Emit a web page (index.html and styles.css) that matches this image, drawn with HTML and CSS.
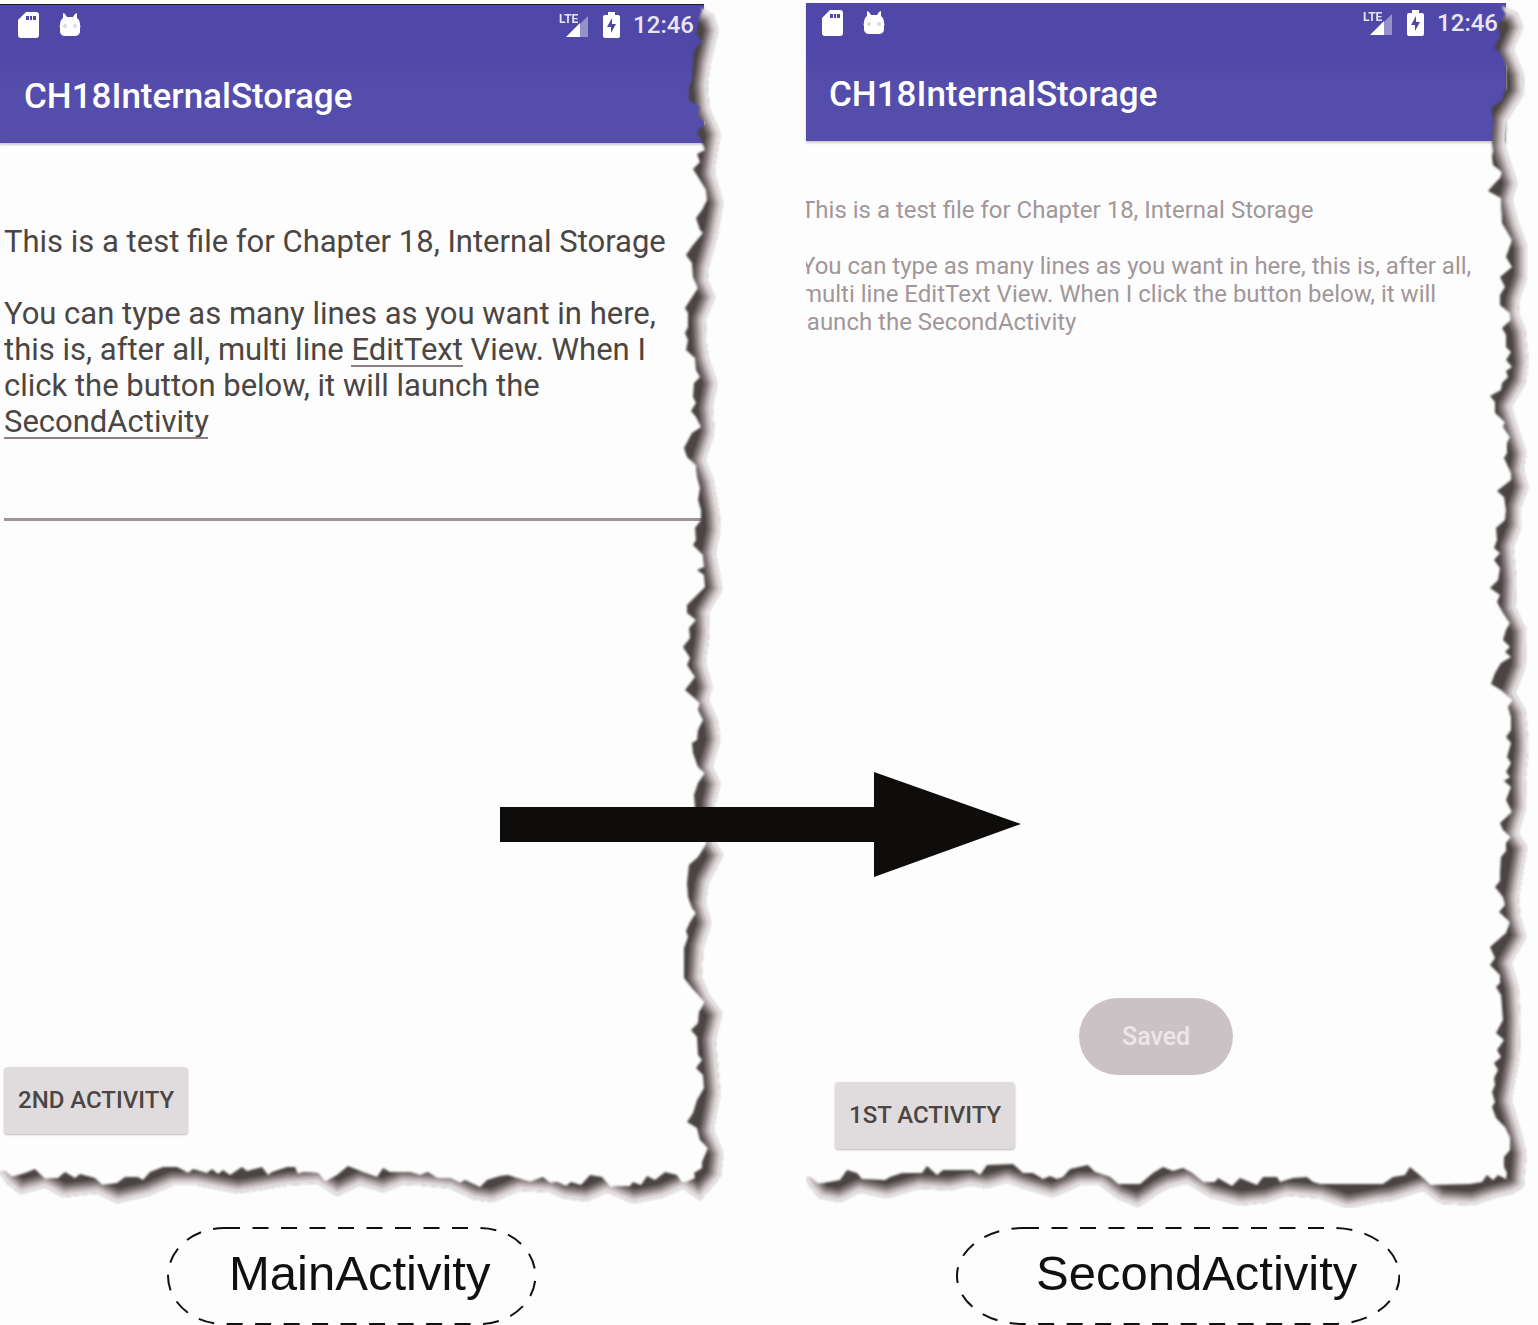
FILE: index.html
```html
<!DOCTYPE html>
<html lang="en">
<head>
<meta charset="utf-8">
<meta name="viewport" content="width=device-width, initial-scale=1">
<title>CH18InternalStorage</title>
<link rel="stylesheet" href="styles.css">
</head>
<body>
<svg class="defs" aria-hidden="true">
  <defs>
    <symbol id="sd" viewBox="0 0 21 26"><path fill-rule="evenodd" d="M8 0H18Q21 0 21 3V23Q21 26 18 26H3Q0 26 0 23V8ZM8 4V8H11V4ZM12 4V8H14V4ZM15 4V8H18V4Z"/></symbol>
    <symbol id="droid" viewBox="0 0 22 24"><path d="M4 0 6 1 8 4H14L16 1 18 0V5Q21 7 21 12 22 13 21 15V19Q20 23 16 23H6Q2 23 1 19V15Q0 13 1 12 1 7 4 5Z"/><circle cx="6" cy="13" r="2" fill="#dcd8e4"/><circle cx="16" cy="13" r="2" fill="#dcd8e4"/></symbol>
    <symbol id="signal" viewBox="0 0 30 26"><path d="M29 4V25H8Z" opacity=".4"/><path d="M21 11V25H7Z"/><text x="0" y="11" font-size="12" font-weight="700" opacity=".85">LTE</text></symbol>
    <symbol id="battery" viewBox="0 0 17 26"><path fill-rule="evenodd" d="M5 0H12V3H15Q17 3 17 5V24Q17 26 15 26H2Q0 26 0 24V5Q0 3 2 3H5ZM9 6 4 15H8V21L13 12H9Z"/></symbol>
  </defs>
</svg>
<main class="board">
  <figure class="figure">
    <section class="screen screen-main">
      <header class="top">
        <div class="status">
          <svg class="sd"><use href="#sd"/></svg>
          <svg class="droid"><use href="#droid"/></svg>
          <svg class="signal"><use href="#signal"/></svg>
          <svg class="battery"><use href="#battery"/></svg>
          <time>12:46</time>
        </div>
        <h1 class="title">CH18InternalStorage</h1>
      </header>
      <div class="editor">
        <textarea class="edit" aria-label="File contents" spellcheck="false">This is a test file for Chapter 18, Internal Storage

You can type as many lines as you want in here, this is, after all, multi line EditText View. When I click the button below, it will launch the SecondActivity</textarea>
        <span class="typo typo-edittext"></span>
        <span class="typo typo-second"></span>
      </div>
      <button class="btn" type="button">2ND ACTIVITY</button>
      <svg class="torn" viewBox="0 0 728 1208" preserveAspectRatio="none" aria-hidden="true">
        <defs>
          <path id="outerA" d="M702 8 713 15 718 30 710 63 707 85 709 108 720 133 715 165 714 173 723 203 716 240 708 268 707 280 715 297 705 320 706 343 708 357 717 383 712 407 714 433 705 460 713 480 719 513 720 530 715 553 722 590 708 613 709 633 705 663 712 687 708 700 717 720 720 740 712 767 720 783 715 803 715 842 723 855 708 883 705 903 711 923 703 947 701 977 710 997 722 1013 715 1040 720 1093 713 1130 723 1153 720 1177 700 1200 683 1188 663 1197 633 1203 607 1192 587 1201 563 1198 550 1192 520 1190 493 1202 473 1199 450 1188 420 1185 403 1184 383 1192 360 1185 337 1196 317 1183 287 1185 238 1193 197 1185 173 1185 150 1195 117 1203 97 1193 63 1197 45 1187 20 1194 7 1183 0 1173"/>
          <clipPath id="bandA"><path clip-rule="evenodd" d="M0 0 702 8 713 15 718 30 710 63 707 85 709 108 720 133 715 165 714 173 723 203 716 240 708 268 707 280 715 297 705 320 706 343 708 357 717 383 712 407 714 433 705 460 713 480 719 513 720 530 715 553 722 590 708 613 709 633 705 663 712 687 708 700 717 720 720 740 712 767 720 783 715 803 715 842 723 855 708 883 705 903 711 923 703 947 701 977 710 997 722 1013 715 1040 720 1093 713 1130 723 1153 720 1177 700 1200 683 1188 663 1197 633 1203 607 1192 587 1201 563 1198 550 1192 520 1190 493 1202 473 1199 450 1188 420 1185 403 1184 383 1192 360 1185 337 1196 317 1183 287 1185 238 1193 197 1185 173 1185 150 1195 117 1203 97 1193 63 1197 45 1187 20 1194 7 1183 0 1173Z
          M0 0 702 8 702 11 699 19 696 33 702 42 695 48 693 60 692 80 689 87 689 100 700 107 698 115 705 123 697 132 702 142 705 150 697 154 700 162 693 169 700 180 706 190 707 200 702 210 696 218 700 230 703 233 693 245 686 255 692 263 693 277 698 288 685 308 688 313 688 327 685 333 688 340 686 350 695 358 696 370 700 377 694 383 693 397 696 403 691 411 696 417 701 427 692 433 684 448 687 457 696 465 697 477 700 488 698 500 701 510 701 520 695 528 696 540 693 545 703 555 704 567 697 570 704 575 705 587 687 605 687 613 696 620 689 628 690 638 683 647 690 658 687 665 695 677 685 690 700 703 698 710 703 720 698 730 697 740 692 743 693 753 698 767 705 773 698 783 694 795 695 807 707 843 698 857 689 865 687 883 688 897 692 908 696 913 690 922 686 931 688 937 684 948 684 978 692 988 705 1002 699 1012 698 1023 691 1030 697 1037 698 1055 702 1060 696 1068 703 1075 704 1088 697 1100 693 1113 687 1122 697 1128 700 1140 708 1148 702 1162 702 1168 694 1173 695 1178 685 1183 681 1182 677 1175 665 1172 655 1180 647 1176 641 1185 633 1182 630 1186 610 1187 602 1177 590 1175 581 1185 571 1182 566 1186 557 1182 550 1183 543 1177 530 1182 517 1178 508 1175 500 1176 487 1180 480 1187 465 1180 460 1183 450 1178 437 1178 428 1172 420 1175 410 1172 390 1172 383 1168 377 1177 363 1172 348 1166 337 1175 325 1182 318 1173 303 1172 298 1174 295 1167 287 1167 272 1172 268 1175 262 1167 247 1171 242 1167 230 1175 223 1170 218 1174 212 1169 207 1173 193 1169 188 1173 183 1170 177 1167 163 1167 150 1172 143 1180 138 1177 125 1177 117 1183 102 1185 95 1178 80 1174 75 1178 65 1172 58 1178 45 1179 35 1169 25 1173 12 1177 5 1171 0 1172Z"/></clipPath>
        </defs>
        <g class="soft"><g clip-path="url(#bandA)"><rect class="dark" width="728" height="1208"/><use href="#outerA" class="s1"/><use href="#outerA" class="s2"/><use href="#outerA" class="s3"/><use href="#outerA" class="s4"/></g></g>
      </svg>
    </section>
    <figcaption class="label label-main">
      <svg aria-hidden="true"><rect x="1" y="1" rx="56" ry="48" stroke-dasharray="16 12.5"/></svg>
      <span>MainActivity</span>
    </figcaption>
  </figure>

  <figure class="figure">
    <section class="screen screen-second">
      <header class="top">
        <div class="status">
          <svg class="sd"><use href="#sd"/></svg>
          <svg class="droid"><use href="#droid"/></svg>
          <svg class="signal"><use href="#signal"/></svg>
          <svg class="battery"><use href="#battery"/></svg>
          <time>12:46</time>
        </div>
        <h1 class="title">CH18InternalStorage</h1>
      </header>
      <div class="reader">
        <p>This is a test file for Chapter 18, Internal Storage</p>
        <p>You can type as many lines as you want in here, this is, after all, multi line EditText View. When I click the button below, it will launch the SecondActivity</p>
      </div>
      <div class="toast" role="status">Saved</div>
      <button class="btn" type="button">1ST ACTIVITY</button>
      <svg class="torn" viewBox="806 0 732 1208" preserveAspectRatio="none" aria-hidden="true">
        <defs>
          <path id="outerB" d="M1502 6 1517 13 1523 27 1513 50 1523 73 1524 93 1507 120 1505 147 1517 183 1512 200 1518 223 1527 247 1527 277 1519 300 1518 313 1525 330 1528 363 1525 383 1511 407 1516 423 1526 453 1523 470 1528 487 1521 507 1521 527 1513 547 1516 580 1515 607 1526 630 1525 667 1515 693 1525 710 1528 740 1528 750 1525 777 1526 807 1518 833 1527 847 1518 897 1520 917 1526 937 1511 963 1518 987 1520 1017 1519 1057 1511 1100 1520 1130 1526 1153 1523 1187 1513 1193 1493 1198 1473 1205 1440 1203 1423 1190 1393 1200 1377 1202 1347 1208 1320 1198 1287 1195 1267 1202 1240 1205 1210 1197 1187 1183 1170 1187 1160 1192 1138 1207 1117 1198 1100 1185 1080 1185 1053 1197 1023 1188 1007 1182 987 1188 970 1185 950 1190 920 1188 887 1198 860 1192 840 1202 820 1198 810 1187 806 1178"/>
          <clipPath id="bandB"><path clip-rule="evenodd" d="M806 0 1502 6 1517 13 1523 27 1513 50 1523 73 1524 93 1507 120 1505 147 1517 183 1512 200 1518 223 1527 247 1527 277 1519 300 1518 313 1525 330 1528 363 1525 383 1511 407 1516 423 1526 453 1523 470 1528 487 1521 507 1521 527 1513 547 1516 580 1515 607 1526 630 1525 667 1515 693 1525 710 1528 740 1528 750 1525 777 1526 807 1518 833 1527 847 1518 897 1520 917 1526 937 1511 963 1518 987 1520 1017 1519 1057 1511 1100 1520 1130 1526 1153 1523 1187 1513 1193 1493 1198 1473 1205 1440 1203 1423 1190 1393 1200 1377 1202 1347 1208 1320 1198 1287 1195 1267 1202 1240 1205 1210 1197 1187 1183 1170 1187 1160 1192 1138 1207 1117 1198 1100 1185 1080 1185 1053 1197 1023 1188 1007 1182 987 1188 970 1185 950 1190 920 1188 887 1198 860 1192 840 1202 820 1198 810 1187 806 1178Z
          M806 0 1502 6 1506 15 1498 25 1500 37 1494 47 1502 55 1506 67 1506 88 1502 100 1491 108 1493 117 1493 130 1492 142 1493 150 1492 157 1493 165 1502 172 1500 178 1495 183 1488 191 1501 198 1502 223 1512 240 1506 257 1512 267 1500 277 1505 287 1500 295 1500 305 1510 313 1511 320 1502 328 1506 335 1506 347 1511 352 1506 360 1512 367 1506 371 1508 377 1502 383 1501 390 1490 396 1495 402 1495 413 1505 422 1503 427 1510 437 1507 443 1507 453 1504 458 1511 473 1511 480 1497 491 1504 497 1506 510 1505 520 1496 528 1497 540 1494 548 1500 553 1494 560 1500 568 1498 580 1490 588 1500 595 1497 602 1503 613 1510 623 1506 630 1503 640 1510 647 1505 652 1511 657 1501 663 1495 673 1491 684 1501 690 1513 700 1508 707 1511 717 1511 730 1506 737 1511 743 1507 757 1511 763 1506 772 1510 777 1504 781 1511 787 1506 800 1512 812 1500 823 1503 830 1511 837 1506 843 1506 851 1501 857 1500 873 1500 881 1495 887 1503 897 1505 905 1499 912 1510 922 1506 933 1490 947 1495 958 1490 965 1500 975 1500 983 1496 987 1501 995 1503 1020 1496 1033 1504 1040 1497 1050 1501 1057 1494 1063 1498 1070 1494 1078 1495 1085 1492 1092 1495 1102 1492 1107 1496 1118 1505 1127 1510 1137 1510 1150 1504 1157 1504 1167 1507 1173 1506 1178 1508 1180 1498 1175 1493 1180 1487 1175 1482 1182 1470 1184 1430 1185 1423 1178 1410 1167 1405 1175 1393 1177 1383 1184 1320 1184 1313 1182 1307 1177 1293 1178 1280 1182 1277 1177 1263 1177 1257 1185 1240 1178 1232 1186 1218 1178 1215 1182 1203 1182 1192 1173 1183 1168 1173 1171 1163 1167 1153 1173 1140 1184 1118 1184 1110 1177 1095 1172 1088 1165 1070 1169 1063 1177 1057 1179 1050 1176 1043 1179 1033 1173 1023 1173 1013 1164 987 1165 980 1175 973 1170 943 1170 937 1175 927 1166 922 1173 902 1173 890 1177 885 1180 862 1179 857 1173 847 1170 840 1180 818 1184 810 1177 806 1178Z"/></clipPath>
        </defs>
        <g class="soft"><g clip-path="url(#bandB)"><rect class="dark" x="806" width="732" height="1208"/><use href="#outerB" class="s1"/><use href="#outerB" class="s2"/><use href="#outerB" class="s3"/><use href="#outerB" class="s4"/></g></g>
      </svg>
    </section>
    <figcaption class="label label-second">
      <svg aria-hidden="true"><rect x="1" y="1" rx="66" ry="48" stroke-dasharray="16 12.5"/></svg>
      <span>SecondActivity</span>
    </figcaption>
  </figure>
  <svg class="arrow" viewBox="0 0 521 105" aria-hidden="true"><path d="M0 35H374V0L521 52 374 105V70H0Z"/></svg>
</main>
</body>
</html>
```
FILE: styles.css
```css
* { box-sizing: border-box; }

body {
  margin: 0;
  background: #fdfdfd;
  color: #12100f;
  font-family: Roboto, "Liberation Sans", sans-serif;
}

.defs { display: none; }

.board {
  position: relative;
  display: grid;
  grid-template-columns: 728fr 732fr;
  column-gap: 78px;
}

.figure { margin: 0; }

.screen {
  position: relative;
  display: flex;
  flex-direction: column;
  align-items: flex-start;
  min-height: 1208px;
}

.screen-main { padding: 4px 24px 74px 0; }
.screen-second { padding: 3px 32px 59px 0; }

.top {
  align-self: stretch;
  background: linear-gradient(#4f48a8 48px, #544dab 80px);
  box-shadow: 0 2px 2px #cfc8cc;
  color: #fff;
}

.screen-main .top { border-top: 1px solid #1c1a22; }

.status {
  display: flex;
  align-items: center;
  height: 40px;
  padding: 0 8px 0 16px;
  font-size: 24px;
  font-weight: 500;
  color: #e9e6f0;
}

.screen-main .status { padding: 0 10px 0 18px; }

.status svg { fill: #fff; }
.sd { width: 21px; height: 26px; }
.droid { width: 22px; height: 24px; margin-left: 20px; }
.signal { width: 30px; height: 26px; margin-left: auto; }
.battery { width: 17px; height: 26px; margin: 0 13px 0 14px; }

.title {
  margin: 0;
  padding: 30px 23px 0;
  height: 98px;
  font-size: 35px;
  line-height: 44px;
  font-weight: 500;
}

.screen-main .title { padding-left: 24px; }

.editor {
  position: relative;
  align-self: stretch;
  margin: 81px 0 0 4px;
}

.edit {
  display: block;
  width: 100%;
  height: 297px;
  padding: 0;
  border: 0;
  border-bottom: 3px solid #9d9294;
  background: none;
  resize: none;
  overflow: hidden;
  outline: 0;
  color: #4b4644;
  font: 31px/36px Roboto, "Liberation Sans", sans-serif;
}

/* spell-check marks over the text */
.typo {
  position: absolute;
  height: 2px;
  background: #8c7f83;
}

.typo-edittext { left: 347px; top: 141px; width: 112px; }
.typo-second { left: 0; top: 213px; width: 204px; }

.btn {
  margin: auto 0 0 4px;
  padding: 0 14px 2px;
  height: 67px;
  border: 0;
  border-radius: 4px;
  background: #e0dcdd;
  box-shadow: 0 1px 2px #bdb5b8;
  color: #4b4644;
  font: 500 24px/28px Roboto, "Liberation Sans", sans-serif;
}

.screen-second .btn { margin-left: 29px; }

.reader {
  align-self: stretch;
  margin-top: 55px;
  overflow: hidden;
  color: #a1979a;
  font-size: 24px;
  line-height: 28px;
}

.reader p { margin: 0 0 28px -5px; }

.toast {
  position: absolute;
  left: 273px;
  bottom: 133px;
  padding: 0 43px;
  border-radius: 39px;
  background: #cbc2c5;
  color: #ebe7e8;
  font-size: 25px;
  font-weight: 500;
  line-height: 77px;
}

.torn {
  position: absolute;
  inset: 0;
  width: 100%;
  height: 100%;
  pointer-events: none;
}

.soft { filter: blur(1px); }
.torn use { fill: none; stroke-linejoin: round; }
.dark { fill: #4a4442; }
.s1 { stroke: #6d6664; stroke-width: 26px; }
.s2 { stroke: #938a8a; stroke-width: 20px; }
.s3 { stroke: #c2b8bb; stroke-width: 14px; }
.s4 { stroke: #e4e0e1; stroke-width: 7px; }

.label {
  position: relative;
  width: fit-content;
  height: 98px;
  margin-top: 19px;
  font-family: "Liberation Sans", Arial, sans-serif;
  font-size: 49px;
  line-height: 92px;
}

.label-main { margin-left: 167px; padding: 0 46px 0 62px; }
.label-second { margin-left: 150px; padding: 0 43px 0 80px; }

.label svg {
  position: absolute;
  inset: 0;
  width: 100%;
  height: 100%;
}

.label rect {
  width: calc(100% - 2px);
  height: calc(100% - 2px);
  fill: none;
  stroke: #12100f;
  stroke-width: 2px;
}

.arrow {
  position: absolute;
  left: 500px;
  top: 772px;
  width: 521px;
  height: 105px;
  fill: #0e0d0b;
}
```
